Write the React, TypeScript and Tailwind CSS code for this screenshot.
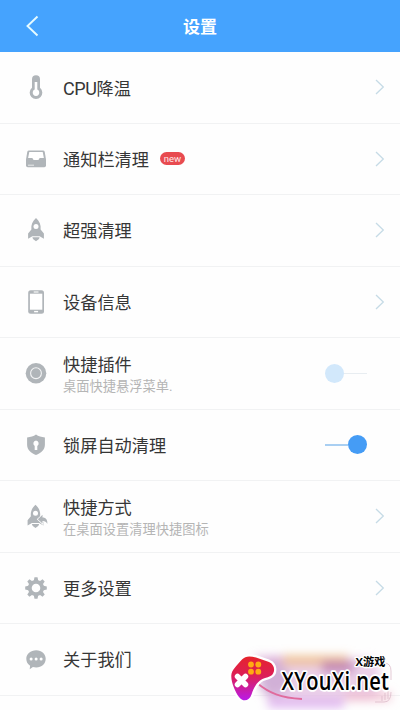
import React from "react";

const G = "#b0b5b9";

function Thermometer() {
  return (
    <svg width="22" height="26" viewBox="0 0 22 26" fill="none">
      <path d="M7 13.800V5.200a4 4 0 0 1 8 0v8.600a6.300 6.300 0 1 1-8 0Z" fill={G} />
      <path d="M9.700 8h2.600v7.600a3.300 3.300 0 1 1-2.600 0Z" fill="#fff" />
    </svg>
  );
}

function Inbox() {
  return (
    <svg width="22" height="26" viewBox="0 0 22 26" fill="none">
      <path d="M4 4.500h14q1.400 0 1.700 1.300L21 13.500v6q0 1.700-1.700 1.700H2.700Q1 21.200 1 19.500v-6l1.300-7.700Q2.600 4.500 4 4.500Z" fill={G} />
      <path d="M4.300 5.900h13.400l1.200 6h-4.300q-.6 2.200-2.300 2.200H9.700q-1.700 0-2.300-2.200H3.100Z" fill="#fff" />
      <path d="M3 19.200H9" stroke="#e8eaeb" strokeWidth="1" />
    </svg>
  );
}

function RocketBody() {
  return (
    <>
      <path d="M11 1c3.500 3.100 5.200 7.200 4.600 11.500l3.300 4v5.300l-4.300-2.500H7.400l-4.300 2.500v-5.300l3.300-4C5.800 8.200 7.500 4.100 11 1Z" fill={G} />
      <circle cx="11" cy="9.600" r="2.500" fill="#fff" />
      <path d="M7.400 20.300h7.200c-.2 2.400-1.700 2.100-3.600 4-1.900-1.900-3.400-1.600-3.600-4Z" fill={G} />
    </>
  );
}

function Rocket() {
  return (
    <svg width="22" height="26" viewBox="0 0 22 26">
      <RocketBody />
    </svg>
  );
}

function RocketShortcut() {
  return (
    <svg width="22" height="26" viewBox="0 0 22 26" className="overflow-visible">
      <g transform="translate(-.5 .7)">
        <RocketBody />
      </g>
      <path d="m12.800 16.200 4.700-4.400v2.600c3.600 0 5.200 2.400 4.800 6.600-1.100-2.300-2.200-3-4.800-3v2.600Z" fill={G} stroke="#fff" strokeWidth="1.400" paintOrder="stroke" />
    </svg>
  );
}

function Phone() {
  return (
    <svg width="22" height="26" viewBox="0 0 22 26">
      <rect x="3.200" y="1.200" width="15.800" height="23.600" rx="2.500" fill={G} />
      <rect x="4.900" y="4.700" width="12.400" height="16" fill="#fff" />
      <path d="M8.700 3h4.800" stroke="#fff" strokeWidth="1.100" />
      <path d="M9.100 22.600h4" stroke="#fff" strokeWidth="1.400" />
    </svg>
  );
}

function Ring() {
  return (
    <svg width="22" height="26" viewBox="0 0 22 26">
      <circle cx="11" cy="13.200" r="10.300" fill={G} />
      <circle cx="11" cy="13.200" r="5.400" fill="none" stroke="#f3f4f5" strokeWidth="1.100" />
    </svg>
  );
}

function Shield() {
  return (
    <svg width="22" height="26" viewBox="0 0 22 26">
      <path d="M11 2.600c2.500 1.800 5.300 2.700 8.900 2.900v7.300c0 5.100-3.800 8.300-8.900 10.300-5.100-2-8.900-5.200-8.900-10.300V5.500c3.600-.2 6.400-1.100 8.900-2.900Z" fill={G} />
      <path d="M11 8.400a3 3 0 0 1 1.300 5.500v4H9.700v-4A3 3 0 0 1 11 8.400Z" fill="#fff" />
    </svg>
  );
}

const teeth = [0, 45, 90, 135, 180, 225, 270, 315];

function Gear() {
  return (
    <svg width="22" height="26" viewBox="0 0 22 26">
      {teeth.map((a) => (
        <path key={a} d="M8.600 6.400 9.500 2.200h3l.9 4.200Z" fill={G} transform={`rotate(${a} 11 13)`} />
      ))}
      <circle cx="11" cy="13" r="6.200" fill="none" stroke={G} strokeWidth="3.800" />
    </svg>
  );
}

function Bubble() {
  return (
    <svg width="22" height="26" viewBox="0 0 22 26">
      <path d="M11.200 4.200c5.600 0 9.500 3.700 9.500 8.600s-3.900 8.600-9.500 8.600q-1.700 0-3.300-.4l-3.200 2.300.4-3.600C2.500 18.100 1.300 15.700 1.300 12.800c0-4.900 4.300-8.600 9.900-8.600Z" fill={G} />
      <circle cx="6.100" cy="13.100" r="1.500" fill="#fff" />
      <circle cx="11.100" cy="13.100" r="1.500" fill="#fff" />
      <circle cx="16.100" cy="13.100" r="1.500" fill="#fff" />
    </svg>
  );
}

function Chevron() {
  return (
    <svg width="10" height="16" viewBox="0 0 10 16" fill="none">
      <path d="m1 1 7.300 7L1 15" stroke="#c6dbe6" strokeWidth="1.300" />
    </svg>
  );
}

function Toggle({ on }: { on?: boolean }) {
  return on ? (
    <div className="mr-[18px] flex w-[42px] items-center">
      <div className="h-[2px] flex-1 bg-[#a9cff2]" />
      <div className="size-[19px] rounded-full bg-[#459cf5]" />
    </div>
  ) : (
    <div className="mr-[18px] flex w-[42px] items-center">
      <div className="size-[19px] rounded-full bg-[#d2e8fb]" />
      <div className="h-px flex-1 bg-[#e8edf1]" />
    </div>
  );
}

type Item = {
  icon: React.ReactNode;
  title: React.ReactNode;
  sub?: string;
  badge?: boolean;
  end?: React.ReactNode;
};

const items: Item[] = [
  { icon: <Thermometer />, title: <><span className="text-[18px] tracking-[-0.4px]">CPU</span>降温</>, end: <Chevron /> },
  { icon: <Inbox />, title: "通知栏清理", badge: true, end: <Chevron /> },
  { icon: <Rocket />, title: "超强清理", end: <Chevron /> },
  { icon: <Phone />, title: "设备信息", end: <Chevron /> },
  { icon: <Ring />, title: "快捷插件", sub: "桌面快捷悬浮菜单.", end: <Toggle /> },
  { icon: <Shield />, title: "锁屏自动清理", end: <Toggle on /> },
  { icon: <RocketShortcut />, title: "快捷方式", sub: "在桌面设置清理快捷图标", end: <Chevron /> },
  { icon: <Gear />, title: "更多设置", end: <Chevron /> },
  { icon: <Bubble />, title: "关于我们" },
];

function Row({ icon, title, sub, badge, end }: Item) {
  return (
    <li className="flex h-[71.5px] items-center border-b border-[#f1f2f3] pr-[15px] pl-[25px]">
      {icon}
      <div className="ml-4 flex-1 pt-[3px]">
        <div className="flex items-center">
          <span className="text-[17.2px] leading-[25px] text-[#363636]">{title}</span>
          {badge && (
            <span className="mb-[3px] ml-[11px] flex h-[13px] w-[25px] items-center justify-center rounded-full bg-[#e84b50] font-[Roboto] text-[9.500px] leading-none text-[#ffe9e9]">
              new
            </span>
          )}
        </div>
        {sub && <div className="text-[13.25px] leading-[18px] text-[#b5b5b5]">{sub}</div>}
      </div>
      {end}
    </li>
  );
}

function Watermark() {
  return (
    <svg className="absolute right-0 bottom-0" width="190" height="70" viewBox="210 640 190 70">
      <defs>
        <filter id="haze" x="-30%" y="-60%" width="160%" height="220%">
          <feGaussianBlur stdDeviation="5" />
        </filter>
        <linearGradient id="pad" x1="0" y1="0" x2="0" y2="1">
          <stop offset="0" stopColor="#e6242b" />
          <stop offset=".45" stopColor="#dc1f59" />
          <stop offset="1" stopColor="#b91bea" />
        </linearGradient>
      </defs>
      <g filter="url(#haze)">
        <rect x="262" y="658" width="117" height="42" rx="12" fill="#e6c4e4" opacity=".8" />
        <rect x="283" y="655" width="65" height="11" fill="#eebb83" opacity=".75" />
        <rect x="322" y="661" width="32" height="12" fill="#b876ad" opacity=".75" />
        <rect x="255" y="656" width="28" height="8" fill="#cf8fc6" opacity=".6" />
        <ellipse cx="274" cy="680" rx="16" ry="16" fill="#c09bcb" opacity=".6" />
        <rect x="268" y="699" width="76" height="9" fill="#d9a8ee" opacity=".8" />
        <rect x="345" y="692" width="46" height="9" fill="#f0b3c8" opacity=".7" />
      </g>
      <path d="M257 683c12 10 24 15 45 16" fill="none" stroke="#e06b9d" strokeWidth="1.800" />
      <path d="M376 663h8q7 0 7 8v9M391 692q0 10-7 10h-9M382 701v-5m3 4v-7m3 6v-8" fill="none" stroke="#d9b4c4" strokeWidth=".7" />
      <path
        d="M242 659.500c3.500-3.800 8-3.500 14-2l13 4.500c6 2.300 7 11 1.500 14-3.500 2-7.500 2-10.500 4.500-4.500 3.500-6.500 8.500-8.500 14-2 6.500-8.500 8-12.500 2.500-4-5.500-8-15-7.700-21.500.3-5.500 5-9.500 10.700-16Z"
        fill="url(#pad)"
        stroke="#fff"
        strokeWidth="4.500"
        paintOrder="stroke"
        strokeLinejoin="round"
      />
      <g fill="#ffab13">
        <circle cx="251" cy="664.500" r="2.900" />
        <circle cx="258.300" cy="664.500" r="2.900" />
        <circle cx="251" cy="671.700" r="2.900" />
        <circle cx="258.300" cy="671.700" r="2.900" />
      </g>
      <path d="m237.500 676.500 8 8m0-8-8 8" stroke="#fff" strokeWidth="5.500" strokeLinecap="round" />
      <g stroke="#fff" strokeLinejoin="round" paintOrder="stroke" fill="#000">
        <text transform="translate(281.500 690) scale(.82 1)" textLength="131" strokeWidth="3.500" fontSize="24.500" fontWeight="600" fontFamily="'Open Sans', 'Noto Sans', sans-serif">
          XYouXi.net
        </text>
        <text x="355.500" y="666" strokeWidth="2.500" fontSize="11.200" fontWeight="700" fontFamily="'Open Sans', 'Noto Sans CJK SC', sans-serif">
          X游戏
        </text>
      </g>
    </svg>
  );
}

export default function App() {
  return (
    <div className="relative h-[710px] w-[400px] overflow-hidden bg-[#fefefe] font-[Roboto,'Noto_Sans_CJK_SC',sans-serif]">
      <header className="grid h-[52px] grid-cols-[60px_1fr_60px] items-center bg-[#45a3fe] text-white">
        <svg className="ml-[25px]" width="16" height="22" viewBox="0 0 16 22" fill="none">
          <path d="M12.500 1.500 2.500 11l10 9.500" stroke="#e6fbff" strokeWidth="1.900" />
        </svg>
        <h1 className="pt-[2px] text-center text-[17px] leading-6 font-bold">设置</h1>
      </header>
      <ul>
        {items.map((item, i) => (
          <Row key={i} {...item} />
        ))}
      </ul>
      <Watermark />
    </div>
  );
}
